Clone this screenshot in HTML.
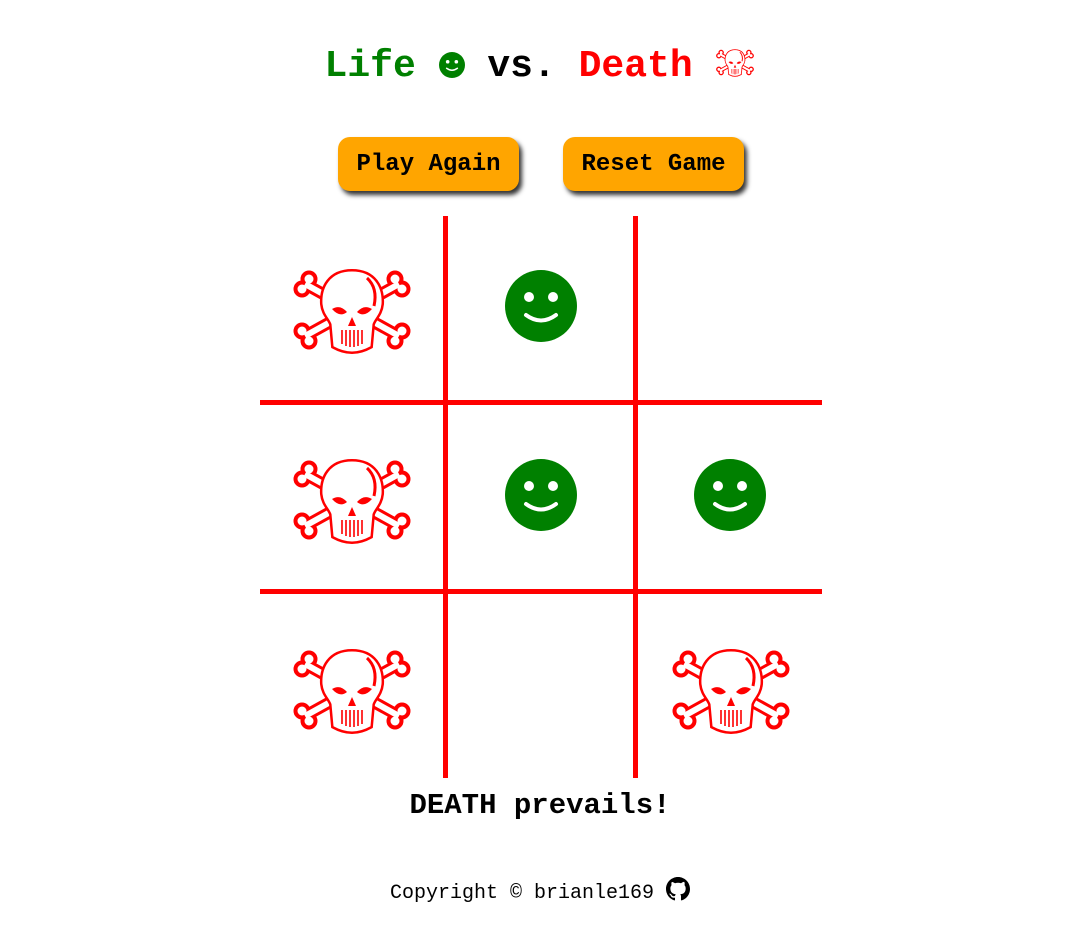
<!DOCTYPE html>
<html><head><style>
body{margin:0;background:#fff;font-family:"Liberation Mono",monospace;}
h1{position:absolute;top:44px;left:0;width:1080px;text-align:center;margin:0;font-size:38px;font-weight:bold;line-height:46px;}
.btn{position:absolute;top:137px;height:54px;width:181px;background:#ffa500;border-radius:12px;box-shadow:3px 4px 5px #333;font:bold 24px "Liberation Mono",monospace;text-align:center;line-height:56px;}
.v{position:absolute;top:216px;width:5px;height:562px;background:red;}
.h{position:absolute;left:260px;width:562px;height:5px;background:red;}
.c{position:absolute;}
#msg{position:absolute;top:789px;width:1080px;text-align:center;font:bold 29px "Liberation Mono",monospace;}
#ft{position:absolute;top:877px;width:1080px;text-align:center;font:20px "Liberation Mono",monospace;}
</style></head><body>
<svg width="0" height="0" style="position:absolute"><defs>
<g id="sk">
<g fill="red" stroke="red">
<path d="M15 22 L109 74 M109 22 L15 74" stroke-width="12"/>
<circle cx="12" cy="27" r="8"/><circle cx="19" cy="17" r="8"/><circle cx="112" cy="27" r="8"/><circle cx="105" cy="17" r="8"/>
<circle cx="12" cy="69" r="8"/><circle cx="19" cy="79" r="8"/><circle cx="112" cy="69" r="8"/><circle cx="105" cy="79" r="8"/>
</g>
<g fill="#fff" stroke="#fff">
<path d="M15 22 L109 74 M109 22 L15 74" stroke-width="6"/>
<circle cx="12" cy="27" r="4.5" stroke="none"/><circle cx="19" cy="17" r="4.5" stroke="none"/><circle cx="112" cy="27" r="4.5" stroke="none"/><circle cx="105" cy="17" r="4.5" stroke="none"/>
<circle cx="12" cy="69" r="4.5" stroke="none"/><circle cx="19" cy="79" r="4.5" stroke="none"/><circle cx="112" cy="69" r="4.5" stroke="none"/><circle cx="105" cy="79" r="4.5" stroke="none"/>
</g>
<path d="M62 10 C40 10 32 26 33 42 C34 52 40 56 42 62 L44 84 Q62 94 80 84 L82 62 C84 56 90 52 91 42 C92 26 84 10 62 10Z" fill="#fff" stroke="red" stroke-width="6"/>
<path d="M62 10 C40 10 32 26 33 42 C34 52 40 56 42 62 L44 84 Q62 94 80 84 L82 62 C84 56 90 52 91 42 C92 26 84 10 62 10Z" fill="#fff" stroke="#fff" stroke-width="1"/>
<path d="M42 47 Q50 42 57 50 Q50 56 42 47Z M82 47 Q74 42 67 50 Q74 56 82 47Z" fill="red"/>
<path d="M62 55 L58 64 L66 64 Z" fill="red"/>
<path d="M52 68 V82 M56 68 V84 M60 68 V85 M64 68 V85 M68 68 V84 M72 68 V82" stroke="red" stroke-width="1.6"/>
<path d="M77 16 Q88 26 84 44" stroke="red" stroke-width="3" fill="none"/>
</g>
<g id="sm"><circle cx="36" cy="36" r="36" fill="green"/><circle cx="24" cy="27" r="5" fill="#fff"/><circle cx="48" cy="27" r="5" fill="#fff"/><path d="M21 45 Q36 56 51 45" stroke="#fff" stroke-width="4" fill="none" stroke-linecap="round"/></g>
</defs></svg>
<h1><span style="color:green">Life <svg width="26" height="26" viewBox="0 0 72 72" style="vertical-align:-2px"><use href="#sm"/></svg></span> vs. <span style="color:red">Death <svg width="40" height="31" viewBox="0 0 124 96" style="vertical-align:-2px"><use href="#sk"/></svg></span></h1>
<div class="btn" style="left:338px">Play Again</div>
<div class="btn" style="left:563px">Reset Game</div>
<div class="v" style="left:443px"></div><div class="v" style="left:633px"></div>
<div class="h" style="top:400px"></div><div class="h" style="top:589px"></div>
<svg class="c" style="left:290px;top:262px" width="124" height="96"><use href="#sk"/></svg>
<svg class="c" style="left:290px;top:452px" width="124" height="96"><use href="#sk"/></svg>
<svg class="c" style="left:290px;top:642px" width="124" height="96"><use href="#sk"/></svg>
<svg class="c" style="left:669px;top:642px" width="124" height="96"><use href="#sk"/></svg>
<svg class="c" style="left:505px;top:270px" width="72" height="72"><use href="#sm"/></svg>
<svg class="c" style="left:505px;top:459px" width="72" height="72"><use href="#sm"/></svg>
<svg class="c" style="left:694px;top:459px" width="72" height="72"><use href="#sm"/></svg>
<div id="msg">DEATH prevails!</div>
<div id="ft">Copyright © brianle169 <svg width="24" height="24" viewBox="0 0 16 16" style="vertical-align:-3px"><path fill="#000" d="M8 0C3.58 0 0 3.58 0 8c0 3.54 2.29 6.53 5.47 7.59.4.07.55-.17.55-.38 0-.19-.01-.82-.01-1.49-2.01.37-2.53-.49-2.69-.94-.09-.23-.48-.94-.82-1.13-.28-.15-.68-.52-.01-.53.63-.01 1.08.58 1.23.82.72 1.21 1.87.87 2.33.66.07-.52.28-.87.51-1.07-1.78-.2-3.64-.89-3.64-3.95 0-.87.31-1.59.82-2.15-.08-.2-.36-1.02.08-2.12 0 0 .67-.21 2.2.82.64-.18 1.32-.27 2-.27.68 0 1.36.09 2 .27 1.53-1.04 2.2-.82 2.2-.82.44 1.1.16 1.92.08 2.12.51.56.82 1.27.82 2.15 0 3.07-1.87 3.75-3.65 3.95.29.25.54.73.54 1.48 0 1.07-.01 1.93-.01 2.2 0 .21.15.46.55.38A8.013 8.013 0 0016 8c0-4.42-3.58-8-8-8z"/></svg></div>
</body></html>
